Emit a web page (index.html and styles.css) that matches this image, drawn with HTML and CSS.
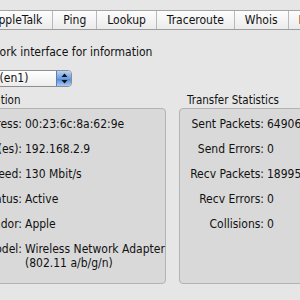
FILE: index.html
```html
<!DOCTYPE html>
<html lang="en">
<head>
    <meta charset="UTF-8">
    <title>Network Utility</title>
    <link rel="stylesheet" href="styles.css">
</head>
<body>
    <div class="window">
        <div class="tabs">
            <div class="tab">Info</div>
            <div class="tab">Netstat</div>
            <div class="tab">AppleTalk</div>
            <div class="tab">Ping</div>
            <div class="tab">Lookup</div>
            <div class="tab">Traceroute</div>
            <div class="tab">Whois</div>
            <div class="tab">Finger</div>
            <div class="tab">Port Scan</div>
        </div>

        <div class="pane">
            <p class="prompt">Please select a network interface for information</p>

            <div class="popup">
                <span class="popup-label">AirPort (en1)</span>
                <span class="stepper">
                    <svg width="7" height="11" viewBox="0 0 7 11">
                        <path d="M3.5 0.5 L6.5 4 L0.5 4 Z" fill="#111"/>
                        <path d="M3.5 10.5 L6.5 7 L0.5 7 Z" fill="#111"/>
                    </svg>
                </span>
            </div>

            <div class="groups">
                <div class="group group-info">
                    <div class="group-title">Interface Information</div>
                    <div class="group-box">
                        <div class="rows rows-info">
                            <span class="label">Hardware Address:</span><span class="value">00:23:6c:8a:62:9e</span>
                            <span class="label">IP Address(es):</span><span class="value">192.168.2.9</span>
                            <span class="label">Link Speed:</span><span class="value">130 Mbit/s</span>
                            <span class="label">Link Status:</span><span class="value">Active</span>
                            <span class="label">Vendor:</span><span class="value">Apple</span>
                            <span class="label">Model:</span><span class="value">Wireless Network Adapter<br>(802.11 a/b/g/n)</span>
                        </div>
                    </div>
                </div>

                <div class="group group-stats">
                    <div class="group-title">Transfer Statistics</div>
                    <div class="group-box">
                        <div class="rows rows-stats">
                            <span class="label">Sent Packets:</span><span class="value">64906</span>
                            <span class="label">Send Errors:</span><span class="value">0</span>
                            <span class="label">Recv Packets:</span><span class="value">189953</span>
                            <span class="label">Recv Errors:</span><span class="value">0</span>
                            <span class="label">Collisions:</span><span class="value">0</span>
                        </div>
                    </div>
                </div>
            </div>
        </div>
    </div>
</body>
</html>
```

FILE: styles.css
```css
* {
    margin: 0;
    padding: 0;
    box-sizing: border-box;
}

body {
    font-family: 'DejaVu Sans Condensed', 'DejaVu Sans', sans-serif;
    font-size: 12px;
    color: #111;
    background: #e6e6e6;
    width: 300px;
    height: 300px;
    overflow: hidden;
}

.window {
    width: 600px;
    padding-top: 10px;
}

/* tab strip */
.tabs {
    display: flex;
    height: 20px;
    margin-left: -121px;
    background: linear-gradient(#fdfdfd, #ebebeb);
    border-top: 1px solid #a5a5a5;
    border-bottom: 1px solid #9c9c9c;
}

.tab {
    padding: 0 10px;
    line-height: 18px;
    border-right: 1px solid #b9b9b9;
    white-space: nowrap;
}

.pane {
    margin-left: -111px;
    padding-top: 14px;
}

.prompt {
    line-height: 16px;
    white-space: nowrap;
}

/* popup button */
.popup {
    display: flex;
    align-items: stretch;
    width: 183px;
    height: 17px;
    margin-top: 10px;
    border: 1px solid #8f8f8f;
    border-radius: 4px;
    background: linear-gradient(#ffffff, #ececec);
    overflow: hidden;
}

.popup-label {
    flex: 1;
    padding-left: 70px;
    line-height: 15px;
    white-space: nowrap;
}

.stepper {
    width: 15px;
    display: flex;
    align-items: center;
    justify-content: center;
    border-left: 1px solid #5d7fb0;
    background: linear-gradient(#b9d3f5, #6e9de0 50%, #4e86d8 51%, #a6cbf6);
}

/* group boxes */
.groups {
    display: grid;
    grid-template-columns: 277px 200px;
    column-gap: 13px;
    margin-top: 7px;
}

.group-title {
    font-size: 11.5px;
    line-height: 13px;
    padding-left: 8px;
    height: 14px;
    white-space: nowrap;
}

.group-info .group-title {
    padding-left: 22px;
}

.group-box {
    height: 176px;
    background: #d9d9d9;
    border: 1px solid #b3b3b3;
    border-radius: 4px;
    padding-top: 8px;
}

.rows {
    display: grid;
    row-gap: 11px;
    column-gap: 3px;
    line-height: 14px;
    white-space: nowrap;
}

.rows-info {
    grid-template-columns: 122px auto;
    padding-left: 10px;
}

.rows-stats {
    grid-template-columns: 74px auto;
    padding-left: 10px;
}

.label {
    text-align: right;
}
```
